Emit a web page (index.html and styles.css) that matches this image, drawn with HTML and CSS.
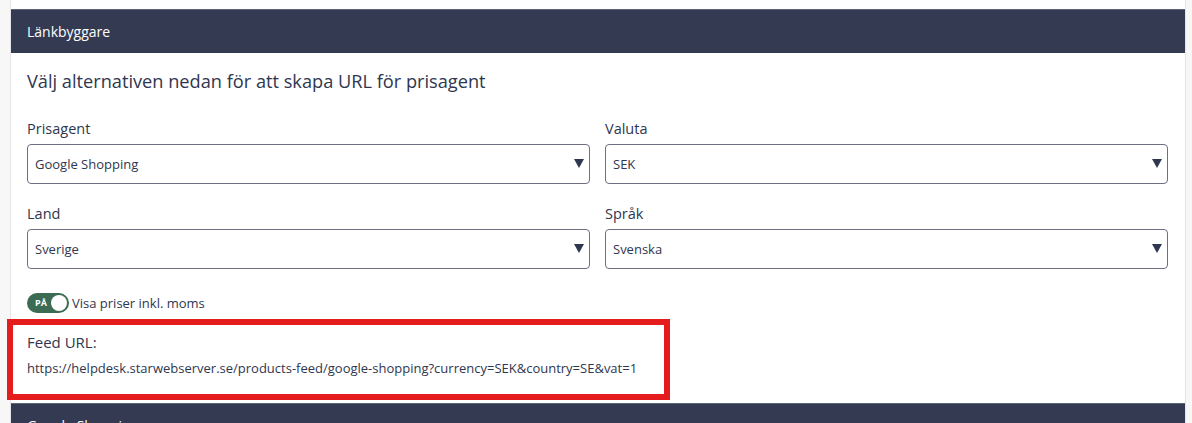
FILE: index.html
```html
<!DOCTYPE html>
<html lang="sv">
<head>
    <meta charset="UTF-8">
    <meta name="viewport" content="width=device-width, initial-scale=1.0">
    <title>Länkbyggare</title>
    <link rel="stylesheet" href="styles.css">
</head>
<body>
    <div class="main">
        <div class="panel">
            <div class="panel-header">Länkbyggare</div>
            <div class="panel-body">
                <h2 class="intro">Välj alternativen nedan för att skapa URL för prisagent</h2>

                <div class="field-grid">
                    <div class="field">
                        <label>Prisagent</label>
                        <div class="select">
                            <span>Google Shopping</span>
                            <svg class="caret" width="10" height="9" viewBox="0 0 10 9"><path d="M0 0H10L5 9Z"/></svg>
                        </div>
                    </div>
                    <div class="field">
                        <label>Valuta</label>
                        <div class="select">
                            <span>SEK</span>
                            <svg class="caret" width="10" height="9" viewBox="0 0 10 9"><path d="M0 0H10L5 9Z"/></svg>
                        </div>
                    </div>
                    <div class="field">
                        <label>Land</label>
                        <div class="select">
                            <span>Sverige</span>
                            <svg class="caret" width="10" height="9" viewBox="0 0 10 9"><path d="M0 0H10L5 9Z"/></svg>
                        </div>
                    </div>
                    <div class="field">
                        <label>Språk</label>
                        <div class="select">
                            <span>Svenska</span>
                            <svg class="caret" width="10" height="9" viewBox="0 0 10 9"><path d="M0 0H10L5 9Z"/></svg>
                        </div>
                    </div>
                </div>

                <div class="toggle-row">
                    <span class="toggle">
                        <span class="toggle-text">PÅ</span>
                        <span class="toggle-knob"></span>
                    </span>
                    <span class="toggle-label">Visa priser inkl. moms</span>
                </div>

                <div class="feed-url">
                    <div class="feed-title">Feed URL:</div>
                    <div class="feed-link">https://helpdesk.starwebserver.se/products-feed/google-shopping?currency=SEK&amp;country=SE&amp;vat=1</div>
                </div>
            </div>
        </div>

        <div class="panel">
            <div class="panel-header">Google Shopping</div>
        </div>
    </div>
</body>
</html>
```

FILE: styles.css
```css
html, body {
    margin: 0;
    padding: 0;
    height: 100%;
    overflow: hidden;
}
body {
    font-family: "Open Sans", "Noto Sans", sans-serif;
    background-color: #f7f7f8;
    color: #2f3650;
}
.main {
    margin: 0 6px 0 10px;
    min-height: 100%;
    background-color: #fff;
    border-left: 1px solid #e4e4e6;
    border-right: 1px solid #e4e4e6;
    padding-top: 9px;
}
.panel-header {
    height: 43px;
    border-top: 1px solid #5f6578;
    background-color: #333a52;
    color: #fff;
    font-size: 14px;
    line-height: 43px;
    padding-left: 16px;
}
.panel-body {
    padding: 16px 17px 3px 16px;
}
.intro {
    margin: 0 0 26px;
    font-size: 18.2px;
    font-weight: normal;
    line-height: 24px;
    color: #2f3650;
}
.field-grid {
    display: grid;
    grid-template-columns: 1fr 1fr;
    column-gap: 15px;
    row-gap: 20px;
}
.field label {
    display: block;
    font-size: 14.5px;
    line-height: 20px;
    margin-bottom: 5px;
    color: #2f3650;
}
.select {
    display: flex;
    justify-content: space-between;
    align-items: center;
    height: 40px;
    box-sizing: border-box;
    border: 1px solid #6c6f82;
    border-radius: 4px;
    padding: 0 5px 0 7px;
    font-size: 13px;
    color: #2f3650;
}
.caret {
    fill: #2f3650;
    margin-top: -2px;
}
.toggle-row {
    display: flex;
    align-items: center;
    gap: 3px;
    margin-top: 23px;
    height: 21px;
}
.toggle {
    display: flex;
    align-items: center;
    justify-content: space-between;
    width: 42px;
    height: 20px;
    box-sizing: border-box;
    border-radius: 10px;
    background-color: #3b6c53;
    padding: 0 2px 0 8px;
}
.toggle-text {
    color: #fff;
    font-size: 9px;
    font-weight: bold;
}
.toggle-knob {
    width: 16px;
    height: 16px;
    border-radius: 50%;
    background-color: #fff;
}
.toggle-label {
    font-size: 13px;
    color: #2f3650;
}
.feed-url {
    width: 663px;
    box-sizing: border-box;
    margin: 6px 0 0 -20px;
    border: 6px solid #e41c1e;
    padding: 7px 14px 17px;
}
.feed-title {
    font-size: 15px;
    line-height: 20px;
    margin-bottom: 7px;
}
.feed-link {
    font-size: 13px;
    line-height: 18px;
}
```
